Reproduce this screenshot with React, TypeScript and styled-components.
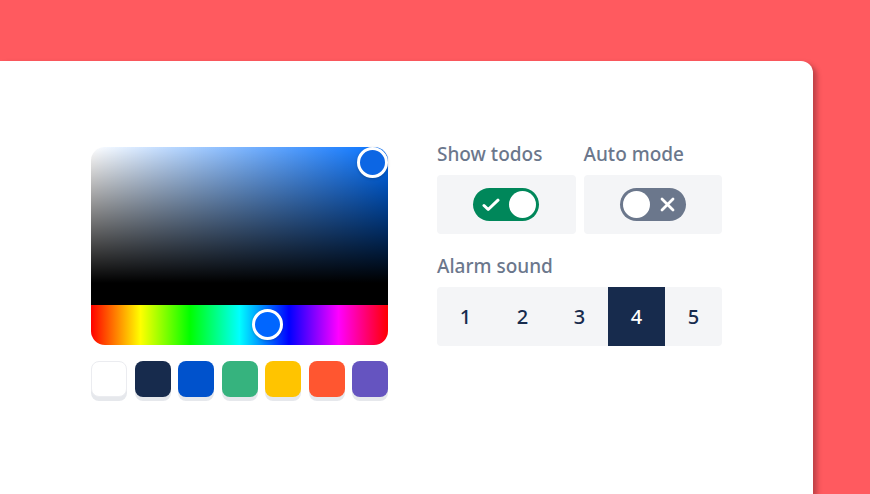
import styled, { createGlobalStyle } from 'styled-components';

const GlobalStyle = createGlobalStyle`
  html, body {
    margin: 0;
    padding: 0;
    background: #ff5a5f;
    font-family: 'Noto Sans', 'Open Sans', sans-serif;
    overflow: hidden;
  }
`;

const swatches = ['#ffffff', '#172b4d', '#0052cc', '#36b37e', '#ffc400', '#ff5630', '#6554c0'];
const sounds = [1, 2, 3, 4, 5];

const CheckIcon = () => (
  <svg width="18" height="14" viewBox="0 0 18 14" fill="none">
    <path d="M2 7.5l4.2 4L16 2.2" stroke="#fff" strokeWidth="3" strokeLinecap="round" strokeLinejoin="round" />
  </svg>
);

const CrossIcon = () => (
  <svg width="15" height="15" viewBox="0 0 15 15" fill="none">
    <path d="M2 2l11 11M13 2L2 13" stroke="#fff" strokeWidth="2.8" strokeLinecap="round" />
  </svg>
);

const App = () => {
  return (
    <>
      <GlobalStyle />
      <Page>
        <Card>
          <Picker>
            <PickerFrame>
              <Saturation />
              <HueBar />
              <Handle $x={281} $y={15} $color="#0c66e4" />
              <Handle $x={176} $y={177} $color="#0066ff" />
            </PickerFrame>
            <Swatches>
              {swatches.map((c) => (
                <Swatch key={c} $color={c} />
              ))}
            </Swatches>
          </Picker>

          <Settings>
            <ToggleRow>
              <Field>
                <Label>Show todos</Label>
                <ToggleBox>
                  <Toggle $on>
                    <IconSlot><CheckIcon /></IconSlot>
                    <Knob />
                  </Toggle>
                </ToggleBox>
              </Field>
              <Field>
                <Label>Auto mode</Label>
                <ToggleBox>
                  <Toggle>
                    <Knob />
                    <IconSlot><CrossIcon /></IconSlot>
                  </Toggle>
                </ToggleBox>
              </Field>
            </ToggleRow>
            <Field>
              <Label>Alarm sound</Label>
              <Segmented>
                {sounds.map((n) => (
                  <Segment key={n} $active={n === 4}>
                    {n}
                  </Segment>
                ))}
              </Segmented>
            </Field>
          </Settings>
        </Card>
      </Page>
    </>
  );
};

export default App;

const Page = styled.div`
  width: 870px;
  height: 494px;
  padding-top: 61px;
  box-sizing: border-box;
  overflow: hidden;
`;

const Card = styled.div`
  width: 813px;
  height: 433px;
  background: #ffffff;
  border-top-right-radius: 12px;
  box-shadow: 4px 3px 5px rgba(70, 20, 25, 0.35);
  box-sizing: border-box;
  padding: 81px 0 0 91px;
  display: flex;
  align-items: flex-start;
  gap: 49px;
`;

const Picker = styled.div`
  width: 297px;
  margin-top: 5px;
  display: flex;
  flex-direction: column;
  gap: 16px;
`;

const PickerFrame = styled.div`
  position: relative;
  width: 297px;
  height: 198px;
  border-radius: 14px;
`;

const Saturation = styled.div`
  height: 158px;
  border-radius: 14px 14px 0 0;
  background:
    linear-gradient(to bottom, rgba(0, 0, 0, 0) 0%, #000 86%),
    linear-gradient(to right, #fff 0%, rgba(255, 255, 255, 0) 100%),
    hsl(214, 100%, 50%);
`;

const HueBar = styled.div`
  height: 40px;
  border-radius: 0 0 14px 14px;
  background: linear-gradient(
    to right,
    #ff0000 0%,
    #ffff00 16.66%,
    #00ff00 33.33%,
    #00ffff 50%,
    #0000ff 66.66%,
    #ff00ff 83.33%,
    #ff0000 100%
  );
`;

const Handle = styled.div<{ $x: number; $y: number; $color: string }>`
  position: absolute;
  left: ${(p) => p.$x}px;
  top: ${(p) => p.$y}px;
  width: 25px;
  height: 25px;
  margin: -15.5px 0 0 -15.5px;
  border: 3px solid #ffffff;
  border-radius: 50%;
  background: ${(p) => p.$color};
  box-shadow: 0 1px 3px rgba(0, 0, 0, 0.2);
`;

const Swatches = styled.div`
  display: flex;
  justify-content: space-between;
`;

const Swatch = styled.div<{ $color: string }>`
  width: 36px;
  height: 36px;
  border-radius: 8px;
  background: ${(p) => p.$color};
  box-sizing: border-box;
  border: ${(p) => (p.$color === '#ffffff' ? '1px solid #ebecf0' : 'none')};
  box-shadow: 0 4px 0 rgba(9, 30, 66, 0.1);
`;

const Settings = styled.div`
  width: 285px;
  display: flex;
  flex-direction: column;
  gap: 20px;
`;

const ToggleRow = styled.div`
  display: flex;
  gap: 8px;
`;

const Field = styled.div`
  display: flex;
  flex-direction: column;
  gap: 9px;
  flex: 1;
`;

const Label = styled.div`
  font-size: 19px;
  line-height: 24px;
  font-weight: 500;
  color: #6b778c;
`;

const ToggleBox = styled.div`
  height: 59px;
  border-radius: 4px;
  background: #f4f5f7;
  display: flex;
  align-items: center;
  justify-content: center;
`;

const Toggle = styled.div<{ $on?: boolean }>`
  width: 66px;
  height: 33px;
  border-radius: 17px;
  background: ${(p) => (p.$on ? '#00875a' : '#6b778c')};
  box-sizing: border-box;
  padding: 3px;
  display: flex;
  align-items: center;
  justify-content: space-between;
`;

const Knob = styled.div`
  width: 27px;
  height: 27px;
  border-radius: 50%;
  background: #ffffff;
`;

const IconSlot = styled.div`
  width: 30px;
  display: flex;
  align-items: center;
  justify-content: center;
`;

const Segmented = styled.div`
  height: 59px;
  border-radius: 4px;
  background: #f4f5f7;
  display: flex;
  overflow: hidden;
`;

const Segment = styled.div<{ $active?: boolean }>`
  flex: 1;
  display: flex;
  align-items: center;
  justify-content: center;
  font-size: 20px;
  font-weight: 500;
  color: ${(p) => (p.$active ? '#ffffff' : '#172b4d')};
  background: ${(p) => (p.$active ? '#172b4d' : 'transparent')};
`;
